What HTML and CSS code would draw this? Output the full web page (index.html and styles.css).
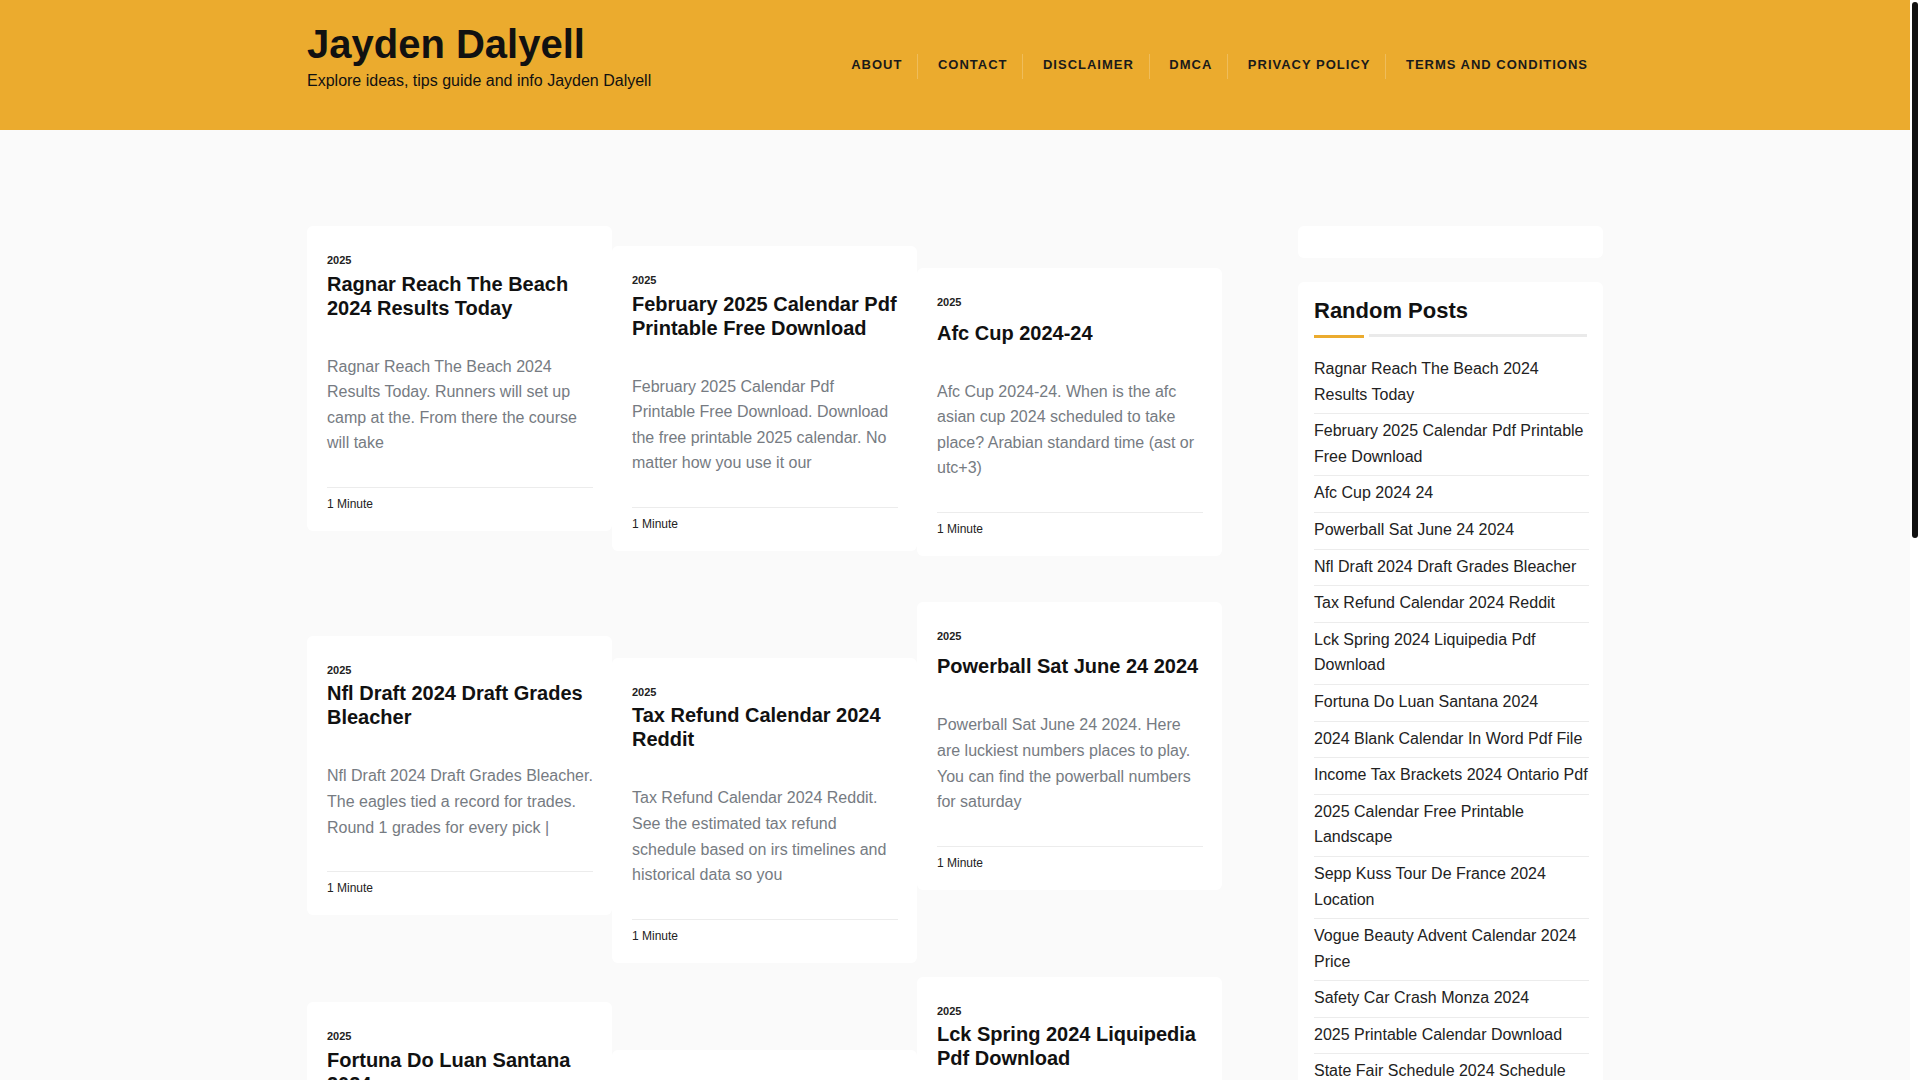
FILE: index.html
```html
<!DOCTYPE html>
<html lang="en">
<head>
<meta charset="utf-8">
<title>Jayden Dalyell</title>
<link rel="stylesheet" href="styles.css">
</head>
<body>
<header class="site-header">
  <div class="container header-inner">
    <div class="branding">
      <p class="site-title"><a href="#">Jayden Dalyell</a></p>
      <p class="site-desc">Explore ideas, tips guide and info Jayden Dalyell</p>
    </div>
    <nav class="main-nav">
      <ul>
        <li><a href="#">About</a></li>
        <li><a href="#">Contact</a></li>
        <li><a href="#">Disclaimer</a></li>
        <li><a href="#">DMCA</a></li>
        <li><a href="#">Privacy Policy</a></li>
        <li><a href="#">Terms and Conditions</a></li>
      </ul>
    </nav>
  </div>
</header>

<main class="site-main">
  <div class="container content">
    <div class="posts">
      <div class="col col--1">
        <article class="card">
          <p class="card__cat">2025</p>
          <h2 class="card__title">Ragnar Reach The Beach 2024 Results Today</h2>
          <p class="card__excerpt">Ragnar Reach The Beach 2024 Results Today. Runners will set up camp at the. From there the course will take</p>
          <div class="card__meta">1 Minute</div>
        </article>
        <article class="card">
          <p class="card__cat">2025</p>
          <h2 class="card__title">Nfl Draft 2024 Draft Grades Bleacher</h2>
          <p class="card__excerpt">Nfl Draft 2024 Draft Grades Bleacher. The eagles tied a record for trades. Round 1 grades for every pick |</p>
          <div class="card__meta">1 Minute</div>
        </article>
        <article class="card">
          <p class="card__cat">2025</p>
          <h2 class="card__title">Fortuna Do Luan Santana 2024</h2>
          <p class="card__excerpt">Fortuna Do Luan Santana 2024. Confira a agenda completa de shows. Veja as datas, cidades e ingressos da turnê</p>
          <div class="card__meta">1 Minute</div>
        </article>
        <article class="card">
          <p class="card__cat">2025</p>
          <h2 class="card__title">Income Tax Brackets 2024 Ontario Pdf</h2>
          <p class="card__excerpt">Income Tax Brackets 2024 Ontario Pdf. Find the federal and provincial tax rates for the year so you can plan</p>
          <div class="card__meta">1 Minute</div>
        </article>
        <article class="card">
          <p class="card__cat">2025</p>
          <h2 class="card__title">Vogue Beauty Advent Calendar 2024 Price</h2>
          <p class="card__excerpt">Vogue Beauty Advent Calendar 2024 Price. Discover what is inside this year and how much it will cost you</p>
          <div class="card__meta">1 Minute</div>
        </article>
      </div>

      <div class="col col--2">
        <article class="card">
          <p class="card__cat">2025</p>
          <h2 class="card__title">February 2025 Calendar Pdf Printable Free Download</h2>
          <p class="card__excerpt">February 2025 Calendar Pdf Printable Free Download. Download the free printable 2025 calendar. No matter how you use it our</p>
          <div class="card__meta">1 Minute</div>
        </article>
        <article class="card">
          <p class="card__cat">2025</p>
          <h2 class="card__title">Tax Refund Calendar 2024 Reddit</h2>
          <p class="card__excerpt">Tax Refund Calendar 2024 Reddit. See the estimated tax refund schedule based on irs timelines and historical data so you</p>
          <div class="card__meta">1 Minute</div>
        </article>
        <article class="card">
          <p class="card__cat">2025</p>
          <h2 class="card__title">2024 Blank Calendar In Word Pdf File</h2>
          <p class="card__excerpt">2024 Blank Calendar In Word Pdf File. Download an editable template for free and print it at home or</p>
          <div class="card__meta">1 Minute</div>
        </article>
        <article class="card">
          <p class="card__cat">2025</p>
          <h2 class="card__title">2025 Calendar Free Printable Landscape</h2>
          <p class="card__excerpt">2025 Calendar Free Printable Landscape. Choose from a wide range of layouts and print them on any paper</p>
          <div class="card__meta">1 Minute</div>
        </article>
        <article class="card">
          <p class="card__cat">2025</p>
          <h2 class="card__title">Safety Car Crash Monza 2024</h2>
          <p class="card__excerpt">Safety Car Crash Monza 2024. Here is what happened on the track and how the race was affected</p>
          <div class="card__meta">1 Minute</div>
        </article>
      </div>

      <div class="col col--3">
        <article class="card">
          <p class="card__cat">2025</p>
          <h2 class="card__title card__title--single">Afc Cup 2024-24</h2>
          <p class="card__excerpt">Afc Cup 2024-24. When is the afc asian cup 2024 scheduled to take place? Arabian standard time (ast or utc+3)</p>
          <div class="card__meta">1 Minute</div>
        </article>
        <article class="card">
          <p class="card__cat">2025</p>
          <h2 class="card__title card__title--single">Powerball Sat June 24 2024</h2>
          <p class="card__excerpt">Powerball Sat June 24 2024. Here are luckiest numbers places to play. You can find the powerball numbers for saturday</p>
          <div class="card__meta">1 Minute</div>
        </article>
        <article class="card">
          <p class="card__cat">2025</p>
          <h2 class="card__title">Lck Spring 2024 Liquipedia Pdf Download</h2>
          <p class="card__excerpt">Lck Spring 2024 Liquipedia Pdf Download. Find the full schedule, standings and results of the league so</p>
          <div class="card__meta">1 Minute</div>
        </article>
        <article class="card">
          <p class="card__cat">2025</p>
          <h2 class="card__title">Sepp Kuss Tour De France 2024 Location</h2>
          <p class="card__excerpt">Sepp Kuss Tour De France 2024 Location. Follow every stage of the race and see where the riders will</p>
          <div class="card__meta">1 Minute</div>
        </article>
        <article class="card">
          <p class="card__cat">2025</p>
          <h2 class="card__title">2025 Printable Calendar Download</h2>
          <p class="card__excerpt">2025 Printable Calendar Download. Get a clean monthly and yearly layout that you can print whenever you</p>
          <div class="card__meta">1 Minute</div>
        </article>
      </div>
    </div>

    <aside class="sidebar">
      <div class="widget widget--empty"></div>
      <div class="widget">
        <h3 class="widget-title">Random Posts</h3>
        <div class="widget-rule"><span class="rule-accent"></span><span class="rule-line"></span></div>
        <ul class="post-list">
          <li><a href="#">Ragnar Reach The Beach 2024 Results Today</a></li>
          <li><a href="#">February 2025 Calendar Pdf Printable Free Download</a></li>
          <li><a href="#">Afc Cup 2024 24</a></li>
          <li><a href="#">Powerball Sat June 24 2024</a></li>
          <li><a href="#">Nfl Draft 2024 Draft Grades Bleacher</a></li>
          <li><a href="#">Tax Refund Calendar 2024 Reddit</a></li>
          <li><a href="#">Lck Spring 2024 Liquipedia Pdf Download</a></li>
          <li><a href="#">Fortuna Do Luan Santana 2024</a></li>
          <li><a href="#">2024 Blank Calendar In Word Pdf File</a></li>
          <li><a href="#">Income Tax Brackets 2024 Ontario Pdf</a></li>
          <li><a href="#">2025 Calendar Free Printable Landscape</a></li>
          <li><a href="#">Sepp Kuss Tour De France 2024 Location</a></li>
          <li><a href="#">Vogue Beauty Advent Calendar 2024 Price</a></li>
          <li><a href="#">Safety Car Crash Monza 2024</a></li>
          <li><a href="#">2025 Printable Calendar Download</a></li>
          <li><a href="#">State Fair Schedule 2024 Schedule</a></li>
          <li><a href="#">Fall Out Boy Tour 2024 Setlist</a></li>
          <li><a href="#">Ncaa Bracket 2024 Printable Pdf</a></li>
        </ul>
      </div>
    </aside>
  </div>
</main>

<footer class="site-footer">
  <div class="container footer-inner">
    <p>Copyright © 2025 Jayden Dalyell. All rights reserved.</p>
  </div>
</footer>

<div class="scrollbar" aria-hidden="true"><div class="scrollbar__thumb"></div></div>
</body>
</html>
```

FILE: styles.css
```css
html {
  scrollbar-width: none;
}

html, body {
  margin: 0;
  padding: 0;
}

body {
  padding-right: 10px;
  background: #fafafa;
  color: #222;
  font-family: "Liberation Sans", Arial, Helvetica, sans-serif;
}

a {
  color: inherit;
  text-decoration: none;
}

/* Scrollbar drawn over the right edge of the window */
.scrollbar {
  position: fixed;
  top: 0;
  right: 0;
  width: 10px;
  height: 100vh;
  background: #ffffff;
}

.scrollbar__thumb {
  margin: 2px 2px 0;
  height: 536px;
  border-radius: 3px;
  background: #111;
}

.container {
  width: 1296px;
  margin: 0 auto;
}

/* Header */
.site-header {
  background: #ebab2e;
  height: 130px;
}

.header-inner {
  display: flex;
  justify-content: space-between;
  align-items: flex-start;
}

.branding {
  padding-top: 20px;
}

.site-title {
  margin: 0;
  font-size: 40px;
  line-height: 48px;
  font-weight: 700;
  color: #111;
}

.site-desc {
  margin: 1px 0 0;
  font-size: 16px;
  line-height: 24px;
  color: #111;
}

.main-nav {
  padding-top: 54px;
}

.main-nav ul {
  display: flex;
  list-style: none;
  margin: 0;
  padding: 0;
}

.main-nav li {
  padding: 0 15px 4px 19.5px;
  border-left: 1px solid rgba(255, 255, 255, 0.22);
}

.main-nav li:first-child {
  border-left: none;
}

.main-nav a {
  display: block;
  font-size: 13px;
  line-height: 21px;
  font-weight: 700;
  letter-spacing: 1px;
  text-transform: uppercase;
  color: #1a1a1a;
}

/* Main */
.site-main {
  padding: 96px 0 120px;
}

.content {
  display: flex;
  justify-content: space-between;
  align-items: flex-start;
}

.posts {
  width: 915px;
  display: flex;
  align-items: flex-start;
}

.col {
  width: 305px;
  display: flex;
  flex-direction: column;
  gap: 87px;
}

.col--2 {
  padding-top: 20px;
}

.col--3 {
  padding-top: 42px;
}

.col--1 .card:first-child {
  margin-bottom: 18px;
}

.col--2 .card:first-child {
  margin-bottom: 20px;
}

.col--3 .card:first-child {
  margin-bottom: -41px;
}

.card {
  background: #fff;
  border-radius: 6px;
  padding: 26px 19px 18px 20px;
}

.card__cat {
  margin: 0 0 3px;
  font-size: 11px;
  line-height: 16.5px;
  font-weight: 700;
  color: #222;
}

.card__title {
  margin: 0 0 34px;
  font-size: 20px;
  line-height: 24px;
  font-weight: 700;
  color: #111;
}

.card__title--single {
  padding-top: 7px;
}

.card__excerpt {
  margin: 0 0 31px;
  font-size: 16px;
  line-height: 25.6px;
  color: #767b82;
}

.card__meta {
  border-top: 1px solid #ececec;
  padding-top: 7px;
  font-size: 12px;
  line-height: 18px;
  color: #222;
}

/* Sidebar */
.sidebar {
  width: 305px;
}

.widget {
  background: #fff;
  border-radius: 6px;
  padding: 16px 14px 16px 16px;
  margin-bottom: 24px;
}

.widget--empty {
  height: 32px;
  padding: 0;
}

.widget-title {
  margin: 0;
  font-size: 22px;
  line-height: 26px;
  font-weight: 700;
  color: #111;
}

.widget-rule {
  display: flex;
  align-items: flex-end;
  height: 4px;
  margin-top: 10px;
  margin-right: 2px;
}

.rule-accent {
  width: 50px;
  height: 3px;
  background: #ebab2e;
}

.rule-line {
  flex: 1;
  height: 3px;
  margin: 0 0 1px 5px;
  background: #eaeaea;
}

.post-list {
  list-style: none;
  margin: 14px 0 0;
  padding: 0;
}

.post-list li {
  padding: 4px 0 6px;
  border-bottom: 1px solid #ececec;
  font-size: 16px;
  line-height: 25.6px;
  color: #222;
}

/* Footer */
.site-footer {
  background: #111;
  color: #ddd;
}

.footer-inner {
  padding: 30px 0;
  font-size: 14px;
}

.footer-inner p {
  margin: 0;
}
```
